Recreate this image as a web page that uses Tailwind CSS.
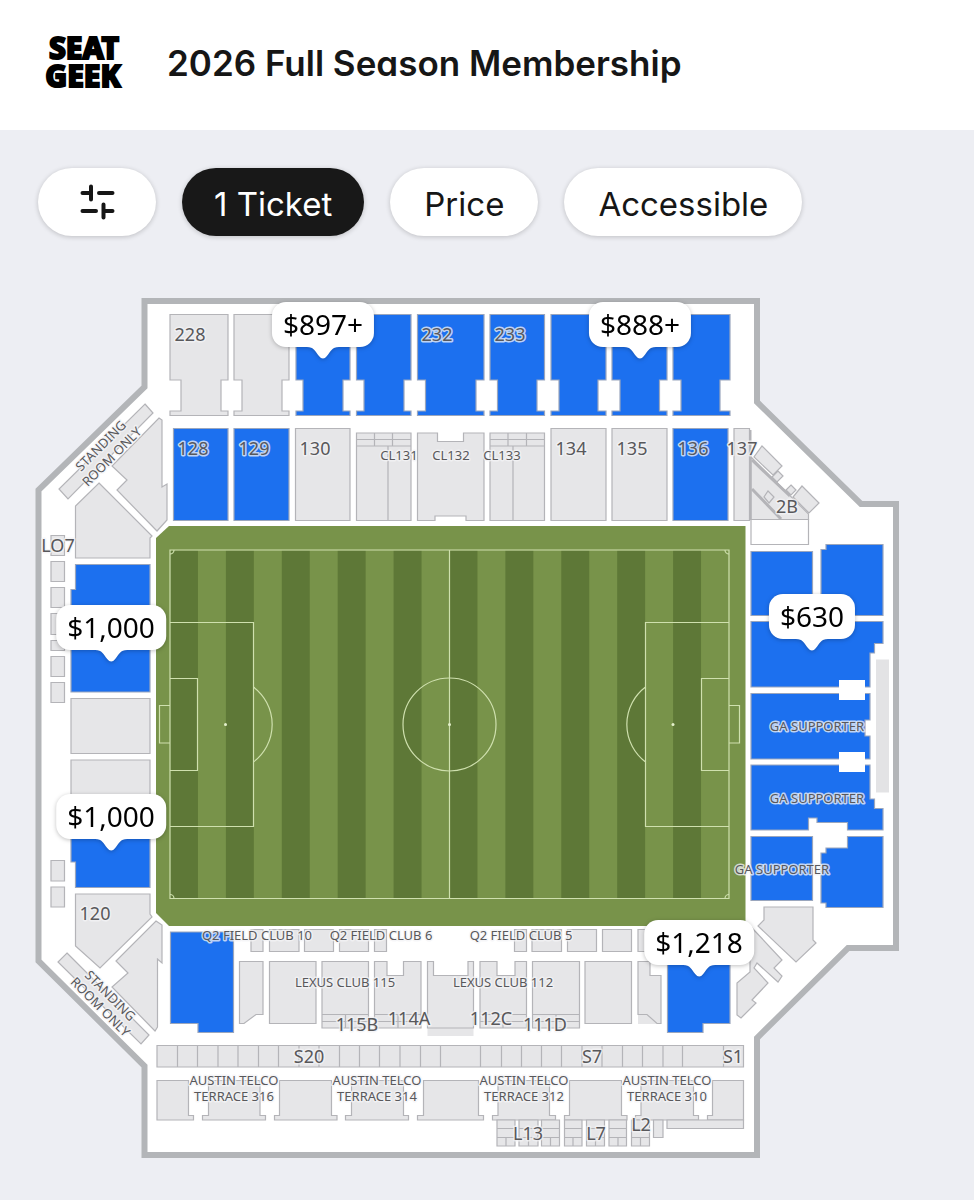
<!DOCTYPE html>
<html lang="en">
<head>
<meta charset="utf-8">
<meta name="viewport" content="width=device-width, initial-scale=1">
<title>2026 Full Season Membership</title>
<script src="https://cdn.jsdelivr.net/npm/@tailwindcss/browser@4"></script>
</head>
<body class="min-h-screen bg-[#edeef3] font-[Inter,sans-serif] text-[#161616] [font-feature-settings:'cv11']">

<header class="flex items-center gap-11 bg-white px-11 pt-[30px] pb-[34px]">
  <a href="#" aria-label="SeatGeek home" class="block shrink-0">
    <svg class="h-[66px] w-[79px] overflow-visible" viewBox="0 0 79 66" fill="#000" stroke="#000" stroke-width="2" font-family="'Noto Sans',sans-serif" font-weight="800" font-size="30" text-anchor="middle">
      <text x="40" y="29">SEAT</text>
      <text x="39" y="57">GEEK</text>
    </svg>
  </a>
  <h1 class="text-[35px] leading-10 font-semibold">2026 Full Season Membership</h1>
</header>

<main>
  <div class="flex flex-wrap gap-[26px] px-[38px] py-[38px] text-[33px] leading-10">
    <button type="button" aria-label="Filters" class="flex h-[68px] w-[118px] items-center justify-center rounded-full bg-white shadow-[0_1px_5px_rgba(0,0,0,0.2)]">
      <svg class="size-9" viewBox="0 0 36 36" fill="none" stroke="#161616" stroke-width="4" stroke-linecap="round">
        <path d="M3.500 9H12M12 2.500V15.500M20 9H33.500M3.500 27H17M24.500 20.500V33.500M24.500 27H33.500"/>
      </svg>
    </button>
    <button type="button" class="h-[68px] rounded-full bg-[#181818] px-8 pt-1 text-white shadow-[0_1px_5px_rgba(0,0,0,0.2)]">1 Ticket</button>
    <button type="button" class="h-[68px] rounded-full bg-white px-[34px] pt-1 shadow-[0_1px_5px_rgba(0,0,0,0.2)]">Price</button>
    <button type="button" class="h-[68px] rounded-full bg-white px-[34px] pt-1 shadow-[0_1px_5px_rgba(0,0,0,0.2)]">Accessible</button>
  </div>

  <section aria-label="Seat map" class="relative w-full">
    <svg class="block h-auto w-full" viewBox="0 274 974 926" role="img" aria-label="Stadium seating chart">
      <!-- stadium outline -->
      <path d="M144.500 301H757V402L861 504H896V948H848L757 1038V1155H144.500V1066L38.500 961V490L144.500 387Z" fill="#fff" stroke="#b3b5b8" stroke-width="6"/>

      <!-- pitch -->
      <path d="M169 526H745.500V926H169L156 913V538Z" fill="#78934a"/>
      <path d="M170 724.500H729" stroke="#5e7837" stroke-width="348" stroke-dasharray="27.950"/>
      <g fill="none" stroke="#cfe0ae" stroke-width="1.200">
        <path d="M170 550H729V898.500H170ZM449.500 550V898.500M170 622.500H253.500V826.500H170M170 678.500H197.500V770.500H170M170 705.500H159.500V743H170M253.500 687A47 47 0 0 1 253.500 762M729 622.500H645.500V826.500H729M729 678.500H701.500V770.500H729M729 705.500H739.500V743H729M645.500 687A47 47 0 0 0 645.500 762"/>
        <circle cx="449.500" cy="724.500" r="46.500"/>
        <path d="M174 550A4 4 0 0 1 170 554M725 550A4 4 0 0 0 729 554M170 894.500A4 4 0 0 1 174 898.500M729 894.500A4 4 0 0 0 725 898.500"/>
      </g>
      <g fill="#e4f0cc"><circle cx="225.500" cy="724.500" r="1.500"/><circle cx="449.500" cy="724.500" r="1.500"/><circle cx="673" cy="724.500" r="1.500"/></g>

      <!-- unavailable sections -->
      <g fill="#e6e6e8" stroke="#b4b4b8" stroke-width="1.200">
        <path d="M170 314.500H228V380H221V411H228V415.500H170V411H181V380H170Z"/>
        <path d="M234 314.500H289V380H282V411H289V415.500H234V411H242V380H234Z"/>
        <path d="M295.500 428.500H350V520.500H295.500ZM551 428.500H606V520.500H551ZM612 428.500H667V520.500H612ZM734 428.500H749.500V520.500H734Z"/>
        <path d="M356.500 433H411V520.500H356.500ZM356.500 439.500H411M356.500 446H411M374.500 433V446M392.500 433V446M388 446V520.500"/>
        <path d="M417.500 433H437.500V441.500H463.500V433H484V520.500H466V516H435V520.500H417.500Z"/>
        <path d="M490 433H544.500V520.500H490ZM490 439.500H544.500M490 446H544.500M508 433V446M526.500 433V446M513 446V520.500"/>
        <!-- upper left corner -->
        <path d="M145 404L153 413L68 499L59 489Z"/>
        <path d="M159 418L162 420V487L167 484V520L157 531L117 490L127 480L112 466Z"/>
        <path d="M99 483L152 536L150 538V558H75.500V506Z"/>
        <!-- west suites -->
        <path d="M51 535.500H64.500V555.500H51ZM51 561.500H64.500V581.500H51ZM51 587.500H64.500V607.500H51ZM51 613.500H64.500V634.500H51ZM51 640.500H64.500V650.500H51ZM51 656.500H64.500V676.500H51ZM51 682.500H64.500V702.500H51ZM51 860.500H64.500V881H51ZM51 887H64.500V907H51Z"/>
        <path d="M71 698.500H150V753.500H71ZM71 760H150V815H71Z"/>
        <!-- lower left corner -->
        <path d="M75.500 894H150V914L152 917L100 968L75.500 946Z"/>
        <path d="M156 921L162 925V963L157.500 959V1027L155 1031L112 987L128 973L116 961Z"/>
        <path d="M67 953L149 1035L141 1044L58 962Z"/>
        <!-- upper right corner -->
        <path d="M751 457L808.500 514V519.500H751Z"/>
        <path d="M808.500 519.500V544.500H751V519.500Z" fill="#fff"/>
        <path d="M752 460L790 496M752 489L781 519" stroke-width="3"/>
        <path d="M762 446L782 466L773 475L754 457Z"/>
        <path d="M802 486L819 503L809 513L793 497Z"/>
        <path d="M778 471L783 476L777 482L772 477ZM791 485L796 490L791 495L786 490ZM768 491L774 497L769 503L764 497Z"/>
        <path d="M750.500 430V520" stroke-width="2"/>
        <!-- lower right corner -->
        <path d="M764 907H813V940L816 943L796 962L758 926L764 920Z"/>
        <path d="M750 926L754 930L782 960L774 968L782 976L778 982L757 963L754 968L768 983L752 1000L756 1003L741 1018L737 1015V983L750 972Z"/>
        <!-- field clubs -->
        <path d="M251 929.500H263V951.500H251ZM269.500 929.500H299V951.500H269.500ZM304.500 929.500H333.500V951.500H304.500ZM339.500 929.500H368.500V951.500H339.500ZM374.500 929.500H386.500V951.500H374.500ZM514.500 929.500H526.500V951.500H514.500ZM532 929.500H561.500V951.500H532ZM567.500 929.500H596.500V951.500H567.500ZM602.500 929.500H631.500V951.500H602.500ZM638 929.500H660V951.500H638Z"/>
        <path d="M239.500 961.500H263V1014.500H256L244 1023.500H239.500ZM269.500 961.500H316V1023.500H269.500ZM585 961.500H631.500V1023.500H585Z"/>
        <path d="M322 961.500H368.500V1028H322ZM322 1014.500H368.500M322 1021.500H368.500M345.500 1014.500V1028"/>
        <path d="M374.500 961.500H387V975.500H403.500V961.500H421V1028H374.500ZM374.500 1014.500H421M374.500 1021.500H421M398 1014.500V1028"/>
        <path d="M427.500 1028H473.500V1036H427.500Z" stroke="none"/>
        <path d="M427.500 961.500H433.500V975.500H468V961.500H473.500V1028H427.500Z"/>
        <path d="M480 961.500H497V975.500H515V961.500H526.500V1028H480ZM480 1014.500H526.500M480 1021.500H526.500M503 1014.500V1028"/>
        <path d="M532.500 961.500H579.500V1028H532.500ZM532.500 1014.500H579.500M532.500 1021.500H579.500M556 1014.500V1028"/>
        <path d="M638 1014H661V1024H638Z" stroke="none"/>
        <path d="M638 961.500H650V975.500H661V1023.500H657L647 1014.500H638Z"/>
        <!-- suites -->
        <path d="M157 1045.500H743.500V1067H157ZM177.500 1045.500V1067M197.500 1045.500V1067M218 1045.500V1067M238 1045.500V1067M258.500 1045.500V1067M278.500 1045.500V1067M299 1045.500V1067M319 1045.500V1067M339.500 1045.500V1067M359.500 1045.500V1067M379.500 1045.500V1067M400 1045.500V1067M420.500 1045.500V1067M440.500 1045.500V1067M480.500 1045.500V1067M501.500 1045.500V1067M521.500 1045.500V1067M541.500 1045.500V1067M561.500 1045.500V1067M582 1045.500V1067M602 1045.500V1067M622.500 1045.500V1067M642.500 1045.500V1067M663 1045.500V1067M682.500 1045.500V1067M723.500 1045.500V1067"/>
        <!-- terraces -->
        <path d="M157 1080.500H188.500V1115.500H193.500V1120H157Z"/>
        <path d="M208.500 1080.500H260V1115.500H265.500V1120H202.500V1115.500H208.500Z"/>
        <path d="M279.500 1080.500H331.500V1115.500H337V1120H274.500V1115.500H279.500Z"/>
        <path d="M351.500 1080.500H403.500V1115.500H408.500V1120H345.500V1115.500H351.500Z"/>
        <path d="M423.500 1080.500H478.500V1115.500H483.500V1120H417.500V1115.500H423.500Z"/>
        <path d="M498 1080.500H549.500V1115.500H555.500V1120H492.500V1115.500H498Z"/>
        <path d="M569.500 1080.500H621.500V1115.500H627V1120H564.500V1115.500H569.500Z"/>
        <path d="M641 1080.500H693.500V1115.500H698.500V1120H635.500V1115.500H641Z"/>
        <path d="M712.500 1080.500H743.500V1120H707.500V1115.500H712.500Z"/>
        <path d="M667 1120H743.500V1128.500H667Z"/>
        <!-- lofts -->
        <path d="M497 1120H515V1146H497ZM497 1128.500H515M497 1137.500H515M506 1137.500V1146"/>
        <path d="M519 1120H538V1146H519ZM519 1128.500H538M519 1137.500H538M528.500 1137.500V1146"/>
        <path d="M541.500 1120H559.500V1146H541.500ZM541.500 1128.500H559.500M541.500 1137.500H559.500M550.500 1137.500V1146"/>
        <path d="M564.500 1120H582V1146H564.500ZM564.500 1128.500H582M564.500 1137.500H582M573 1137.500V1146"/>
        <path d="M586.500 1120H604.500V1146H586.500ZM586.500 1128.500H604.500M586.500 1137.500H604.500M595.500 1137.500V1146"/>
        <path d="M609 1120H626.500V1146H609ZM609 1128.500H626.500M609 1137.500H626.500M618 1137.500V1146"/>
        <path d="M631.500 1120H649.500V1146H631.500ZM631.500 1128.500H649.500M631.500 1137.500H649.500M640.500 1137.500V1146"/>
        <path d="M653.500 1120H663V1137.500H653.500Z"/>
      </g>
      <path d="M876 659.500H889V792.500H876Z" fill="#e3e3e5"/>

      <!-- available sections -->
      <g fill="#1c70ef" stroke="#9aa6bd" stroke-width="1.200">
        <path d="M296 314.500H350V380H343V411H350V415.500H296V411H303V380H296Z"/>
        <path d="M356.500 314.500H411V380H404V411H411V415.500H356.500V411H364V380H356.500Z"/>
        <path d="M417.500 314.500H484V380H476V411H484V415.500H417.500V411H425.500V380H417.500Z"/>
        <path d="M490 314.500H544.500V380H537V411H544.500V415.500H490V411H497.500V380H490Z"/>
        <path d="M551 314.500H606V380H598V411H606V415.500H551V411H559V380H551Z"/>
        <path d="M612 314.500H667V380H659.500V411H667V415.500H612V411H620V380H612Z"/>
        <path d="M673 314.500H730V380H720V411H730V415.500H673V411H681V380H673Z"/>
        <path d="M173.500 428.500H228V520.500H173.500ZM234 428.500H289V520.500H234ZM673 428.500H728V520.500H673Z"/>
        <path d="M75.500 564.500H150V692H71V589.500H75.500Z"/>
        <path d="M71 821H150V887.500H75.500V862H71Z"/>
        <path d="M751 551.500H812.500V615.500H751ZM826 544.500H883V615.500H821V549.500H826Z"/>
        <path d="M751 621.500H883V643.500H874.500V653H870V687H751Z"/>
        <path d="M751 693.500H870V720H865V736H870V759H751Z"/>
        <path d="M751 765H870V799H874.500V808.500H883V830H847.500V822.500H817V818H808.500V830H751Z"/>
        <path d="M751 836.500H812.500V900.500H751ZM847.500 836.500H883V907.500H826V903H821V853H826V848H847.500Z"/>
        <path d="M170.500 932H233.500V1032.500H198V1023.500H170.500Z"/>
        <path d="M667.500 932H730V1023.500H703V1032.500H667.500Z"/>
      </g>
      <path d="M839 680H865V700H839ZM839 752H865V772H839Z" fill="#fff"/>

      <!-- labels -->
      <g font-family="'Noto Sans',sans-serif" fill="#58585b" stroke="#f4f4f6" stroke-opacity="0.750" stroke-width="3" stroke-linejoin="round" paint-order="stroke" text-anchor="middle">
        <g font-size="18">
          <text x="190" y="341">228</text><text x="437" y="341">232</text><text x="510" y="341">233</text>
          <text x="193" y="455">128</text><text x="254" y="455">129</text><text x="315" y="455">130</text>
          <text x="571" y="455">134</text><text x="632" y="455">135</text><text x="693" y="455">136</text><text x="742" y="455">137</text>
          <text x="787" y="513">2B</text><text x="58" y="552">LO7</text><text x="95" y="920">120</text>
          <text x="357" y="1031">115B</text><text x="409" y="1025">114A</text><text x="491" y="1025">112C</text><text x="545" y="1031">111D</text>
          <text x="309" y="1063">S20</text><text x="592" y="1063">S7</text><text x="733" y="1063">S1</text>
          <text x="528" y="1140">L13</text><text x="596" y="1140">L7</text><text x="641" y="1131">L2</text>
        </g>
        <g font-size="13">
          <text x="399" y="460">CL131</text><text x="451" y="460">CL132</text><text x="502" y="460">CL133</text>
          <text x="817" y="731">GA SUPPORTER</text><text x="817" y="803">GA SUPPORTER</text><text x="782" y="874">GA SUPPORTER</text>
          <text x="257" y="940">Q2 FIELD CLUB 10</text><text x="381" y="940">Q2 FIELD CLUB 6</text><text x="521" y="940">Q2 FIELD CLUB 5</text>
          <text x="345" y="987">LEXUS CLUB 115</text><text x="503" y="987">LEXUS CLUB 112</text>
          <text x="234" y="1085">AUSTIN TELCO</text><text x="234" y="1101">TERRACE 316</text>
          <text x="377" y="1085">AUSTIN TELCO</text><text x="377" y="1101">TERRACE 314</text>
          <text x="524" y="1085">AUSTIN TELCO</text><text x="524" y="1101">TERRACE 312</text>
          <text x="667" y="1085">AUSTIN TELCO</text><text x="667" y="1101">TERRACE 310</text>
          <text transform="translate(104 449) rotate(-45)">STANDING</text>
          <text transform="translate(115 460) rotate(-45)">ROOM ONLY</text>
          <text transform="translate(107 999) rotate(45)">STANDING</text>
          <text transform="translate(97 1010) rotate(45)">ROOM ONLY</text>
        </g>
      </g>
    </svg>

    <!-- price pins: each tip sits on its map coordinate -->
    <div class="font-['Noto_Sans',sans-serif] text-[28px] leading-[45px] whitespace-nowrap text-black">
      <button type="button" class="absolute flex -translate-x-1/2 -translate-y-full flex-col items-center drop-shadow-[0_1px_2px_rgba(0,0,0,0.25)]" style="left:calc(323 / 974 * 100%);top:calc(85 / 926 * 100%)">
        <span class="rounded-[14px] bg-white px-[11px]">$897+</span>
        <svg class="h-3 w-9" viewBox="0 0 36 12" fill="#fff"><path d="M2 0C9 0 10 4 14 9Q18 14 22 9C26 4 27 0 34 0Z"/></svg>
      </button>
      <button type="button" class="absolute flex -translate-x-1/2 -translate-y-full flex-col items-center drop-shadow-[0_1px_2px_rgba(0,0,0,0.25)]" style="left:calc(640 / 974 * 100%);top:calc(85 / 926 * 100%)">
        <span class="rounded-[14px] bg-white px-[11px]">$888+</span>
        <svg class="h-3 w-9" viewBox="0 0 36 12" fill="#fff"><path d="M2 0C9 0 10 4 14 9Q18 14 22 9C26 4 27 0 34 0Z"/></svg>
      </button>
      <button type="button" class="absolute flex -translate-x-1/2 -translate-y-full flex-col items-center drop-shadow-[0_1px_2px_rgba(0,0,0,0.25)]" style="left:calc(812 / 974 * 100%);top:calc(377 / 926 * 100%)">
        <span class="rounded-[14px] bg-white px-[11px]">$630</span>
        <svg class="h-3 w-9" viewBox="0 0 36 12" fill="#fff"><path d="M2 0C9 0 10 4 14 9Q18 14 22 9C26 4 27 0 34 0Z"/></svg>
      </button>
      <button type="button" class="absolute flex -translate-x-1/2 -translate-y-full flex-col items-center drop-shadow-[0_1px_2px_rgba(0,0,0,0.25)]" style="left:calc(111 / 974 * 100%);top:calc(388 / 926 * 100%)">
        <span class="rounded-[14px] bg-white px-[11px]">$1,000</span>
        <svg class="h-3 w-9" viewBox="0 0 36 12" fill="#fff"><path d="M2 0C9 0 10 4 14 9Q18 14 22 9C26 4 27 0 34 0Z"/></svg>
      </button>
      <button type="button" class="absolute flex -translate-x-1/2 -translate-y-full flex-col items-center drop-shadow-[0_1px_2px_rgba(0,0,0,0.25)]" style="left:calc(111 / 974 * 100%);top:calc(577 / 926 * 100%)">
        <span class="rounded-[14px] bg-white px-[11px]">$1,000</span>
        <svg class="h-3 w-9" viewBox="0 0 36 12" fill="#fff"><path d="M2 0C9 0 10 4 14 9Q18 14 22 9C26 4 27 0 34 0Z"/></svg>
      </button>
      <button type="button" class="absolute flex -translate-x-1/2 -translate-y-full flex-col items-center drop-shadow-[0_1px_2px_rgba(0,0,0,0.25)]" style="left:calc(699 / 974 * 100%);top:calc(703 / 926 * 100%)">
        <span class="rounded-[14px] bg-white px-[11px]">$1,218</span>
        <svg class="h-3 w-9" viewBox="0 0 36 12" fill="#fff"><path d="M2 0C9 0 10 4 14 9Q18 14 22 9C26 4 27 0 34 0Z"/></svg>
      </button>
    </div>
  </section>
</main>
</body>
</html>
